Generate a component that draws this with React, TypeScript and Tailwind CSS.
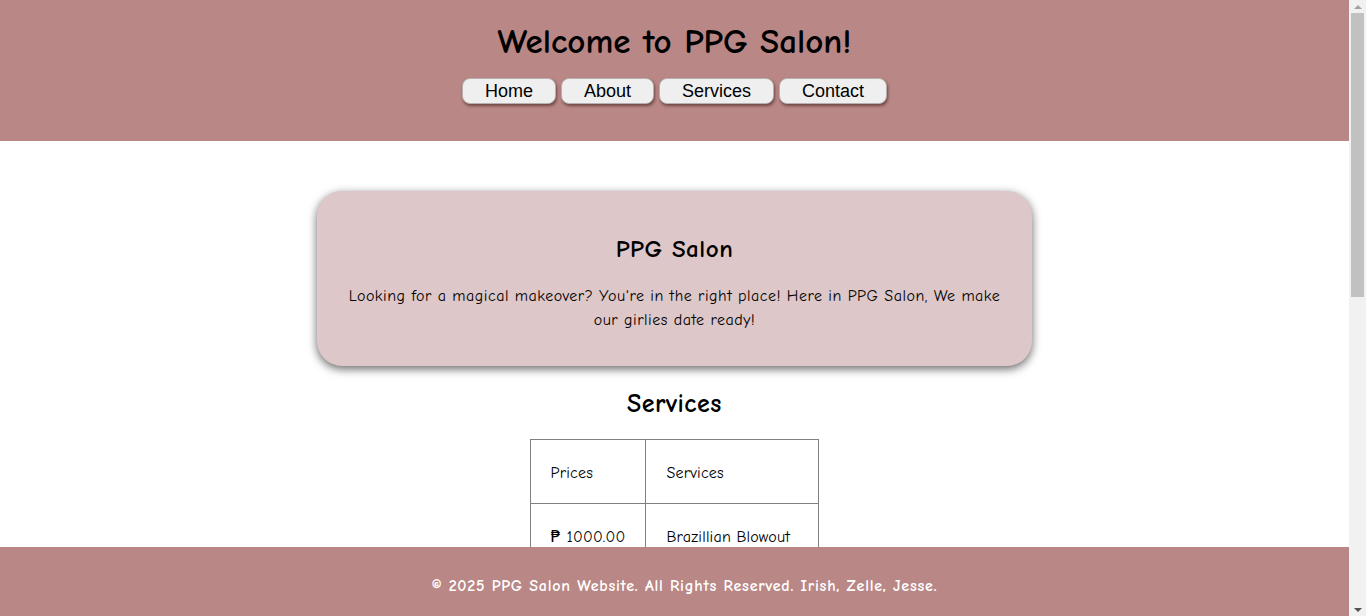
const comic = "font-['Comic_Sans_MS','Comic_Neue','DejaVu_Sans',sans-serif]";

const services = [
  { price: "₱ 1000.00", name: "Brazillian Blowout" },
  { price: "₱ 800.00", name: "Hair Rebond" },
  { price: "₱ 500.00", name: "Hair Color" },
  { price: "₱ 350.00", name: "Hair Spa" },
  { price: "₱ 250.00", name: "Manicure" },
  { price: "₱ 250.00", name: "Pedicure" },
  { price: "₱ 150.00", name: "Haircut" },
  { price: "₱ 600.00", name: "Keratin Treatment" },
  { price: "₱ 450.00", name: "Make-up" },
  { price: "₱ 300.00", name: "Eyelash Extension" },
];

function ScrollBar() {
  return (
    <div className="fixed top-0 right-0 z-20 w-[17px] h-full bg-[#f1f1f1] flex flex-col items-center">
      <div className="h-[13px] flex items-center justify-center">
        <div className="w-0 h-0 border-x-[4px] border-x-transparent border-b-[4px] border-b-[#a3a3a3]" />
      </div>
      <div className="w-[13px] h-[284px] bg-[#c1c1c1]" />
      <div className="flex-1" />
      <div className="h-[13px] flex items-center justify-center">
        <div className="w-0 h-0 border-x-[4px] border-x-transparent border-t-[4px] border-t-[#505050]" />
      </div>
    </div>
  );
}

export default function App() {
  return (
    <div className={`${comic} min-h-screen bg-white text-black mr-[17px]`}>
      <header className="h-[141px] bg-[#b98785] pt-[20px] flex flex-col items-center">
        <h1 className="text-[35px] leading-[44px] font-bold">Welcome to PPG Salon!</h1>
        <nav className="mt-[14px] flex gap-[5px] font-['Liberation_Sans',Arial,sans-serif]">
          {["Home", "About", "Services", "Contact"].map((item) => (
            <button
              key={item}
              className="h-[26px] px-[22px] bg-[#efefef] text-[18px] leading-none rounded-[8px] border border-[#b8b0b0] shadow-[1px_2px_3px_rgba(60,30,30,0.6)]"
            >
              {item}
            </button>
          ))}
        </nav>
      </header>

      <main className="flex flex-col items-center pb-[120px]">
        <section className="mt-[50px] w-[715px] bg-[#ddc7c8] rounded-[25px] shadow-[0_3px_10px_rgba(0,0,0,0.6)] pt-[38px] pb-[34px] px-[30px] text-center tracking-[0.5px]">
          <h2 className="text-[25px] leading-[40px] font-bold">PPG Salon</h2>
          <p className="mt-[15px] text-[16px] leading-[24px]">
            Looking for a magical makeover? You're in the right place! Here in PPG Salon, We make
            our girlies date ready!
          </p>
        </section>

        <h2 className="mt-[22px] text-[26px] leading-[32px] font-bold tracking-[0.5px]">Services</h2>

        <table className="mt-[19px] border-collapse text-[16px] text-left tracking-[0.2px]">
          <tbody>
            <tr>
              <td className="w-[115px] border border-[#808080] px-[20px] pt-[22px] pb-[18px] leading-[23px]">Prices</td>
              <td className="w-[173px] border border-[#808080] px-[20px] pt-[22px] pb-[18px] leading-[23px]">Services</td>
            </tr>
            {services.map((s) => (
              <tr key={s.name}>
                <td className="border border-[#808080] px-[20px] pt-[22px] pb-[18px] leading-[23px] whitespace-nowrap">{s.price}</td>
                <td className="border border-[#808080] px-[20px] pt-[22px] pb-[18px] leading-[23px] whitespace-nowrap">{s.name}</td>
              </tr>
            ))}
          </tbody>
        </table>
      </main>

      <footer className="fixed bottom-0 left-0 right-[17px] h-[69px] bg-[#b98785] flex items-center justify-center pt-[9px] pl-[20px]">
        <p className="text-white text-[16px] font-bold tracking-[0.75px]">
          © 2025 PPG Salon Website. All Rights Reserved. Irish, Zelle, Jesse.
        </p>
      </footer>

      <ScrollBar />
    </div>
  );
}
